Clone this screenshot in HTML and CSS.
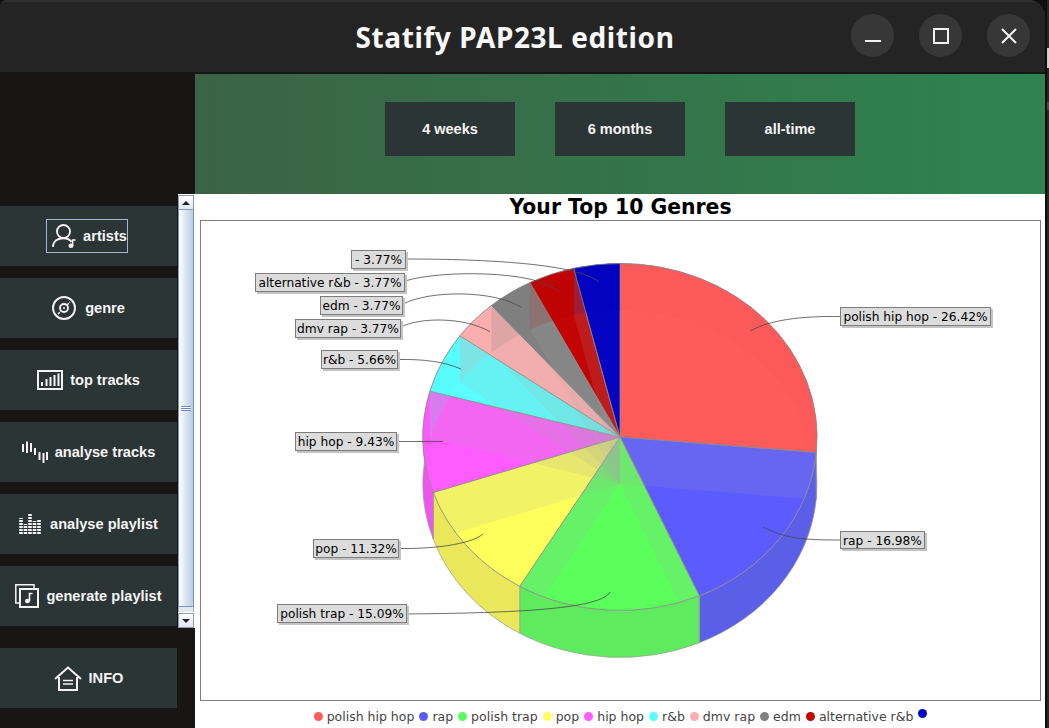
FILE: index.html
```html
<!DOCTYPE html>
<html lang="en">
<head>
    <meta charset="UTF-8">
    <title>Statify PAP23L edition</title>
    <link rel="stylesheet" href="styles.css">
</head>
<body>
    <div id="window">
        <header id="titlebar">
            <h1>Statify PAP23L edition</h1>
            <div class="winbuttons">
                <span class="winbtn"><svg width="16" height="16" viewBox="0 0 16 16"><path d="M0 13h16" stroke="#f2f2f2" stroke-width="2"/></svg></span>
                <span class="winbtn"><svg width="16" height="16" viewBox="0 0 16 16"><rect x="1" y="1" width="14" height="14" fill="none" stroke="#f2f2f2" stroke-width="2"/></svg></span>
                <span class="winbtn"><svg width="16" height="16" viewBox="0 0 16 16"><path d="M1 1l14 14M15 1L1 15" stroke="#f2f2f2" stroke-width="2"/></svg></span>
            </div>
        </header>

        <div id="flex">
            <aside id="sidebar">
                <div id="scrollpane">
                    <div class="menu">
                        <div class="menubtn"><span class="menuinner focused">
                            <svg class="icon" width="24" height="24" viewBox="0 0 24 24" fill="none" stroke="#f4f4f4" stroke-width="1.900">
                                <circle cx="11.500" cy="7.500" r="6.500"/>
                                <path d="M1 23C1 16.500 6 14.200 11.500 14.200c3 0 6 1 8 3.600"/>
                                <ellipse cx="19" cy="21.800" rx="2.500" ry="2.200" fill="#f4f4f4" stroke="none"/>
                                <path d="M20.600 22v-6h3" stroke-width="1.500"/>
                            </svg>
                            artists</span></div>
                        <div class="menubtn"><span class="menuinner wide">
                            <svg class="icon" width="24" height="24" viewBox="0 0 24 24" fill="none" stroke="#f4f4f4" stroke-width="1.900">
                                <circle cx="12" cy="12" r="11"/>
                                <circle cx="12" cy="12" r="4"/>
                                <circle cx="12" cy="12" r="1" fill="#f4f4f4" stroke="none"/>
                                <path d="M6 18l3-3M15 9l3-3" stroke-width="1.500" stroke-dasharray="2.500 1"/>
                            </svg>
                            genre</span></div>
                        <div class="menubtn"><span class="menuinner">
                            <svg class="icon" width="26" height="20" viewBox="0 0 26 20" fill="none" stroke="#f4f4f4">
                                <rect x="1" y="1" width="24" height="18" stroke-width="2"/>
                                <path d="M5 16v-4M9.500 16v-7M13.500 16V7M17.500 16V5M21.500 16V3.500" stroke-width="2"/>
                            </svg>
                            top tracks</span></div>
                        <div class="menubtn"><span class="menuinner">
                            <svg class="icon" width="26" height="22" viewBox="0 0 26 22" fill="none" stroke="#f4f4f4" stroke-width="2">
                                <path d="M1 3v8M5 .5V12M9 2v9M13 7v7M17.500 11v8M21.500 12v10M25 11v8"/>
                            </svg>
                            analyse tracks</span></div>
                        <div class="menubtn"><span class="menuinner wide">
                            <svg class="icon" width="22" height="20" viewBox="0 0 22 20" fill="none" stroke="#f4f4f4" stroke-width="3.600" stroke-dasharray="2 1">
                                <path d="M2 20V4M6.500 20V10M11 20V0M15.500 20V7M20 20V5"/>
                            </svg>
                            analyse playlist</span></div>
                        <div class="menubtn"><span class="menuinner">
                            <svg class="icon" width="24" height="24" viewBox="0 0 24 24" fill="none" stroke="#f4f4f4">
                                <path d="M4 19H.8V.8H19V4" stroke-width="1.500"/>
                                <rect x="5" y="5" width="18" height="18" stroke-width="2"/>
                                <ellipse cx="12.500" cy="17" rx="2.500" ry="2.200" fill="#f4f4f4" stroke="none"/>
                                <path d="M14.500 17V9.500h3" stroke-width="1.600"/>
                            </svg>
                            generate playlist</span></div>
                    </div>
                    <div class="scrollbar">
                        <div class="scrollarrow up"></div>
                        <div class="scrollthumb"><span class="grip"></span></div>
                        <div class="scrolltrack"></div>
                        <div class="scrollarrow down"></div>
                    </div>
                </div>
                <div class="menubtn infobtn"><span class="menuinner">
                    <svg class="icon" width="28" height="25" viewBox="0 0 28 25" fill="none" stroke="#f4f4f4" stroke-width="2">
                        <path d="M1 13L14 1.500 27 13"/>
                        <path d="M5 11v13h18V11"/>
                        <path d="M9 14.500h10M9 18h10" stroke-width="1.700"/>
                    </svg>
                    INFO</span></div>
            </aside>

            <main>
                <div id="periodbar">
                    <div class="periodbtn">4 weeks</div>
                    <div class="periodbtn">6 months</div>
                    <div class="periodbtn">all-time</div>
                </div>
                <div id="chartpanel">
                    <h2>Your Top 10 Genres</h2>
                    <div id="chartframe">
                        <svg id="pie" width="839" height="479" viewBox="201 221 839 479"></svg>
                    </div>
                    <div id="legend"></div>
                </div>
            </main>
        </div>
    </div>
    <div id="desktop"></div>

    <script src="chart.js"></script>
</body>
</html>
```

FILE: styles.css
```css
* {
    box-sizing: border-box;
}

body {
    margin: 0;
    height: 728px;
    overflow: hidden;
    display: flex;
    background-color: #0f0f0f;
    font-family: 'Liberation Sans', Arial, sans-serif;
}

#window {
    width: 1045px;
    height: 728px;
    flex: none;
    display: flex;
    flex-direction: column;
    overflow: hidden;
    border-radius: 6px 16px 0 0;
    background-color: #181514;
}

/* bit of whatever window sits behind this one */
#desktop {
    flex: 1;
    margin-left: 2px;
    background: linear-gradient(#252525 48px, #cfcfcf 48px, #cfcfcf 68px, #252525 68px, #252525 102px, #4a4a4a 102px, #4a4a4a 110px, #252525 110px);
}

#titlebar {
    height: 74px;
    flex: none;
    display: flex;
    align-items: center;
    justify-content: center;
    position: relative;
    background-color: #242424;
    border-top: 2px solid #2e2e2e;
    border-bottom: 2px solid #161616;
}

#titlebar h1 {
    margin: 0 15px 1px 0;
    color: #f8f8f8;
    font-family: 'Noto Sans', sans-serif;
    font-size: 28px;
    font-weight: 700;
    letter-spacing: 0.6px;
}

.winbuttons {
    position: absolute;
    right: 15px;
    top: 12px;
    display: flex;
    gap: 25px;
}

.winbtn {
    width: 43px;
    height: 43px;
    border-radius: 50%;
    background-color: #373737;
    display: flex;
    align-items: center;
    justify-content: center;
}

#flex {
    flex: 1;
    display: flex;
    min-height: 0;
}

#sidebar {
    width: 195px;
    flex: none;
    padding-top: 120px;
}

#scrollpane {
    display: flex;
    height: 434px;
}

.menu {
    width: 178px;
    padding-top: 12px;
    display: flex;
    flex-direction: column;
    gap: 12px;
}

.menubtn {
    width: 177px;
    height: 60px;
    flex: none;
    display: flex;
    align-items: center;
    justify-content: center;
    background-color: #2c3535;
    color: #f4f4f4;
    font-size: 14.6px;
    font-weight: bold;
}

.infobtn {
    margin-top: 20px;
}

.menuinner {
    display: flex;
    align-items: center;
    gap: 7px;
    height: 34px;
}

.menuinner.wide {
    gap: 9px;
}

.menuinner.focused {
    margin-right: 3px;
    padding-left: 5px;
    border: 1px solid #a3b8d0;
}

.icon {
    flex: none;
}

.scrollbar {
    width: 17px;
    display: flex;
    flex-direction: column;
    background-color: #fff;
}

.scrollarrow {
    height: 15px;
    flex: none;
    margin: 1px 1px 0 0;
    display: flex;
    align-items: center;
    justify-content: center;
    background: linear-gradient(#fff, #dfe6ee);
    border: 1px solid #8a9bb8;
}

.scrollarrow::after {
    content: '';
    border-left: 4px solid transparent;
    border-right: 4px solid transparent;
}

.scrollarrow.up::after {
    border-bottom: 4px solid #222;
}

.scrollarrow.down::after {
    border-top: 4px solid #222;
}

.scrollthumb {
    flex: 1;
    margin-right: 1px;
    display: flex;
    align-items: center;
    justify-content: center;
    background: linear-gradient(to right, #ffffff, #dbe6f2 45%, #b9cde3);
    border-left: 1px solid #7c95c8;
    border-right: 1px solid #7c95c8;
    border-bottom: 1px solid #7c95c8;
}

.scrolltrack {
    height: 5px;
    flex: none;
    margin-right: 1px;
    background-color: #e4e8ee;
    border-left: 1px solid #9aa8c0;
    border-right: 1px solid #9aa8c0;
}

.grip {
    width: 10px;
    height: 5px;
    border-top: 1px solid #6f88bd;
    border-bottom: 1px solid #6f88bd;
    background: linear-gradient(#fff 33%, #6f88bd 33%, #6f88bd 66%, #fff 66%);
}

main {
    flex: 1;
    min-width: 0;
    display: flex;
    flex-direction: column;
}

#periodbar {
    height: 120px;
    flex: none;
    display: flex;
    align-items: center;
    justify-content: center;
    gap: 40px;
    padding-bottom: 10px;
    background: linear-gradient(to right, #3b6346, #2e844e);
}

.periodbtn {
    width: 130px;
    height: 54px;
    display: flex;
    align-items: center;
    justify-content: center;
    background-color: #2c3535;
    color: #f4f4f4;
    font-size: 14.5px;
    font-weight: bold;
}

#chartpanel {
    flex: 1;
    padding: 0 4px 0 5px;
    background-color: #fff;
}

#chartpanel h2 {
    margin: 0;
    height: 26px;
    line-height: 26px;
    text-align: center;
    font-family: 'DejaVu Sans', sans-serif;
    font-size: 20.4px;
    font-weight: bold;
    color: #000;
}

#chartframe {
    height: 481px;
    border: 1px solid #808080;
}

#pie {
    display: block;
}

#pie text {
    font-family: 'DejaVu Sans', sans-serif;
    font-size: 12.2px;
    fill: #000;
}

#legend {
    height: 30px;
    display: flex;
    align-items: center;
    justify-content: center;
    gap: 5px;
    color: #444;
    font-family: 'DejaVu Sans', sans-serif;
    font-size: 12.5px;
}

.legenditem {
    display: flex;
    align-items: center;
    gap: 4px;
}

.legenddot {
    width: 9px;
    height: 9px;
    border-radius: 50%;
}

.legenddot.nolabel {
    margin-bottom: 6px;
}
```

FILE: chart.js
```js
const genres = [
    { name: 'polish hip hop', pct: 26.42, color: '#ff5b5b', wall: '#f05a5a' },
    { name: 'rap', pct: 16.98, color: '#5b5bff', wall: '#5b5fe8' },
    { name: 'polish trap', pct: 15.09, color: '#5bff5b', wall: '#5eeb5e' },
    { name: 'pop', pct: 11.32, color: '#ffff5b', wall: '#eae85a' },
    { name: 'hip hop', pct: 9.43, color: '#ff5bff', wall: '#ee55ee' },
    { name: 'r&b', pct: 5.66, color: '#5bffff', wall: '#55eeee' },
    { name: 'dmv rap', pct: 3.77, color: '#ffafaf', wall: '#eea5a5' },
    { name: 'edm', pct: 3.77, color: '#808080', wall: '#787878' },
    { name: 'alternative r&b', pct: 3.77, color: '#c20404', wall: '#b00000' },
    { name: '', pct: 3.77, color: '#0404c2', wall: '#0000b0' }
];

// label boxes and their leader lines, in page pixels
const labels = [
    { box: [840, 307, 151, 19], line: 'M840 316.500C800 316 770 320 750 331' },
    { box: [840, 531, 85, 18], line: 'M840 540C800 540 785 538 763 527' },
    { box: [277, 604, 130, 19], line: 'M407 614C480 613 600 612 610 592' },
    { box: [313, 539, 86, 19], line: 'M399 548.500C430 549 470 545 483 534' },
    { box: [295, 432, 102, 19], line: 'M397 441.500H443' },
    { box: [321, 350, 77, 19], line: 'M398 359.500C425 359 445 362 461 369' },
    { box: [295, 319, 106, 19], line: 'M401 327C420 317 465 317 490 331.700' },
    { box: [320, 296, 83, 19], line: 'M403 304C430 290 495 290 521.700 307.700' },
    { box: [255, 273, 150, 19], line: 'M405 281C440 270 535 270 558 291' },
    { box: [351, 250, 55, 19], line: 'M406 259C470 259 575 262 599 282' }
];

const cx = 620, cy = 437, rx = 197, ry = 173.5, depth = 47;

function pt(f, dy) {
    const a = f * 2 * Math.PI;
    return (cx + rx * Math.sin(a)).toFixed(1) + ' ' + (cy + dy - ry * Math.cos(a)).toFixed(1);
}

function topPath(f0, f1) {
    const large = f1 - f0 > 0.5 ? 1 : 0;
    return `M${cx} ${cy}L${pt(f0, 0)}A${rx} ${ry} 0 ${large} 1 ${pt(f1, 0)}Z`;
}

function wallPath(f0, f1) {
    return `M${pt(f0, 0)}A${rx} ${ry} 0 0 1 ${pt(f1, 0)}L${pt(f1, depth)}A${rx} ${ry} 0 0 0 ${pt(f0, depth)}Z`;
}

function sideQuad(f) {
    return `M${cx} ${cy}L${pt(f, 0)}L${pt(f, depth)}L${cx} ${cy + depth}Z`;
}

let walls = '', tops = '', overlays = '', sides = '', leaders = '', boxes = '';
let f = 0;

genres.forEach(g => {
    const f1 = f + g.pct / 99.98;
    walls += `<path d="${wallPath(f, f1)}" fill="${g.wall}" stroke="#999" stroke-width="0.7"/>`;
    tops += `<path d="${topPath(f, f1)}" fill="${g.color}" stroke="#8c8c8c" stroke-width="0.8"/>`;
    overlays += `<path d="${wallPath(f, f1)}" fill="${g.wall}" fill-opacity="0.18"/>`;
    sides += `<path d="${sideQuad(f1)}" fill="#a8a8a8" fill-opacity="0.15"/>`;
    f = f1;
});

genres.forEach((g, i) => {
    const [x, y, w, h] = labels[i].box;
    const text = `${g.name} - ${g.pct.toFixed(2)}%`;
    leaders += `<path d="${labels[i].line}" fill="none" stroke="#4a4a4a" stroke-width="0.8"/>`;
    boxes += `<rect x="${x + 2}" y="${y + 2}" width="${w}" height="${h}" fill="#c4c4c4"/>`;
    boxes += `<rect x="${x + 0.5}" y="${y + 0.5}" width="${w - 1}" height="${h - 1}" fill="#dcdcdc" stroke="#7c7c7c"/>`;
    boxes += `<text x="${x + w / 2}" y="${y + 13.5}" text-anchor="middle">${text.replace('&', '&amp;')}</text>`;
});

document.getElementById('pie').innerHTML = `
    <defs><clipPath id="topclip"><ellipse cx="${cx}" cy="${cy}" rx="${rx}" ry="${ry}"/></clipPath></defs>
    ${walls}${tops}
    <g clip-path="url(#topclip)">${overlays}${sides}</g>
    ${leaders}${boxes}`;

document.getElementById('legend').innerHTML = genres.map(g => {
    const dotClass = g.name ? 'legenddot' : 'legenddot nolabel';
    const label = g.name ? `<span>${g.name.replace('&', '&amp;')}</span>` : '';
    return `<span class="legenditem"><span class="${dotClass}" style="background-color:${g.color}"></span>${label}</span>`;
}).join('');
```
